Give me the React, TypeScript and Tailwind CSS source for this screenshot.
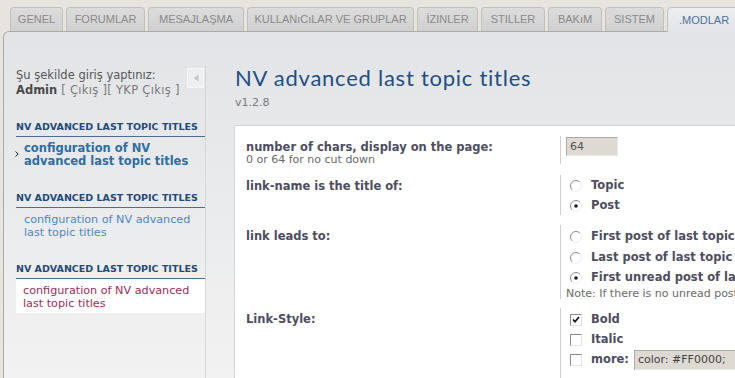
import React from 'react';

const tabs = [
  { label: 'GENEL', w: 'w-[53px]' },
  { label: 'FORUMLAR', w: 'w-[79px]' },
  { label: 'MESAJLAŞMA', w: 'w-[96px]' },
  { label: 'KULLANıCıLAR VE GRUPLAR', w: 'w-[167px]' },
  { label: 'İZINLER', w: 'w-[61px]' },
  { label: 'STILLER', w: 'w-[64px]' },
  { label: 'BAKıM', w: 'w-[54px]' },
  { label: 'SISTEM', w: 'w-[59px]' },
];

const Radio = ({ checked = false }: { checked?: boolean }) => (
  <svg width="12" height="12" viewBox="0 0 12 12" className="shrink-0">
    <circle cx="6" cy="6" r="5.5" fill="#ffffff" />
    <path d="M9.9 2.1A5.5 5.5 0 0 0 2.1 9.9" fill="none" stroke="#8c8c8c" />
    <path d="M2.1 9.9A5.5 5.5 0 0 0 9.9 2.1" fill="none" stroke="#eeeeee" />
    {checked && <circle cx="6" cy="6" r="1.8" fill="#1a1a1a" />}
  </svg>
);

const Checkbox = ({ checked = false }: { checked?: boolean }) => (
  <svg width="12" height="12" viewBox="0 0 12 12" className="shrink-0">
    <rect x="0.5" y="0.5" width="11" height="11" fill="#ffffff" stroke="#e2e2e2" />
    <path d="M0.5 11.5V0.5H11.5" fill="none" stroke="#8a8a8a" />
    {checked && <path d="M3 5.5l2 2.2 4-4.7" fill="none" stroke="#111111" strokeWidth="1.7" />}
  </svg>
);

const MenuGroup = ({ item, tone }: { item: React.ReactNode; tone: 'active' | 'link' | 'current' }) => (
  <div className="mb-[20px]">
    <div className="text-[9.5px] font-bold leading-[14px] pb-[2px] border-b border-[#4a6f97] text-[#1f4b7c] whitespace-nowrap">
      NV ADVANCED LAST TOPIC TITLES
    </div>
    <div
      className={
        tone === 'current'
          ? 'bg-white pt-[5px] pb-[3px] pl-[7px] text-[11.2px] leading-[13px] text-[#9b2d5a]'
          : tone === 'active'
          ? 'flex pt-[5px] pb-[3px] text-[11.5px] leading-[13px] font-bold text-[#2b6fa7]'
          : 'pt-[5px] pb-[3px] pl-[8px] text-[11.2px] leading-[13px] text-[#4d89c2]'
      }
    >
      {tone === 'active' && (
        <svg width="4" height="6" viewBox="0 0 4 6" className="shrink-0 mt-[9px] ml-[-1px] mr-[5px]">
          <path d="M0.5 0.5L3.2 3L0.5 5.5" fill="none" stroke="#222222" />
        </svg>
      )}
      <div>{item}</div>
    </div>
  </div>
);

export default function App() {
  return (
    <div className="w-[735px] h-[378px] overflow-hidden bg-[#e6e4dc] font-['DejaVu_Sans',sans-serif]">
      <div className="flex items-end gap-[3px] pl-[10px] h-[31px] font-['Liberation_Sans',sans-serif] text-[11px]">
        {tabs.map((t) => (
          <div
            key={t.label}
            className={`${t.w} h-[24px] shrink-0 flex items-center justify-center rounded-t-[4px] border border-b-0 border-[#c0c0c0] bg-gradient-to-b from-[#dcdcdc] to-[#d0d0d0] text-[#8a8a8a] whitespace-nowrap`}
          >
            {t.label}
          </div>
        ))}
        <div className="relative z-10 w-[80px] h-[25px] -mb-px shrink-0 flex items-center pl-[11px] rounded-t-[5px] border border-b-0 border-[#c0c0c0] bg-gradient-to-b from-[#eceef0] to-[#e2e4e7] text-[#4b73a2] whitespace-nowrap">
          .MODLAR
        </div>
      </div>

      <div className="ml-[3px] h-[347px] flex rounded-tl-[6px] border-l border-t border-[#aeaca4] bg-gradient-to-b from-[#e2e4e7] to-[#f2f2f2]">
        <div className="w-[230px] shrink-0 pl-[12px]">
          <div className="w-[190px] h-full mt-[33px] border-r border-[#d6d7d9]">
            <div className="flex justify-between">
              <div className="pt-[3px] text-[11.5px] leading-[15px] text-[#575757] whitespace-nowrap">
                <div>Şu şekilde giriş yaptınız:</div>
                <div>
                  <span className="font-bold text-[#4a4a4a]">Admin</span>
                  <span className="text-[#7a7a7a] tracking-[0.3px]"> [ Çıkış ][ YKP Çıkış ]</span>
                </div>
              </div>
              <div className="w-[17px] h-[20px] mt-[3px] mr-[1px] bg-[#eeeff0] border border-[#f6f6f6] flex items-center justify-center">
                <svg width="8" height="10" viewBox="0 0 8 10">
                  <path d="M7 0.5V9.5L1 5Z" fill="#c8c8c8" stroke="#ffffff" strokeWidth="0.6" />
                </svg>
              </div>
            </div>
            <div className="mt-[22px]">
              <MenuGroup
                tone="active"
                item={
                  <>
                    configuration of NV
                    <br />
                    advanced last topic titles
                  </>
                }
              />
              <MenuGroup
                tone="link"
                item={
                  <>
                    configuration of NV advanced
                    <br />
                    last topic titles
                  </>
                }
              />
              <MenuGroup
                tone="current"
                item={
                  <>
                    configuration of NV advanced
                    <br />
                    last topic titles
                  </>
                }
              />
            </div>
          </div>
        </div>

        <div className="flex-1 min-w-0">
          <div className="mt-[33px] pl-[1px] h-[26px] text-[22px] leading-[26px] tracking-[0.75px] text-[#1e4f86] font-['Lato',sans-serif] whitespace-nowrap">
            NV advanced last topic titles
          </div>
          <div className="mt-[5px] pl-[1px] text-[11px] leading-[14px] text-[#7a7a7a]">v1.2.8</div>
          <div className="mt-[15px] h-[260px] bg-white border-l border-t border-[#d4d5d7] pl-[11px] pt-[10px] text-[11px] text-[#4d4d5f] whitespace-nowrap">
            <div className="flex h-[28px]">
              <div className="w-[314px] shrink-0 pt-[4px]">
                <div className="font-bold text-[11.5px] leading-[14px]">number of chars, display on the page:</div>
                <div className="leading-[11px] text-[#6a6a6a]">0 or 64 for no cut down</div>
              </div>
              <div className="border-l border-[#cfcfcf] pl-[5px]">
                <div className="mt-[1px] w-[52px] h-[19px] bg-[#dedad2] border border-[#a9a9a9] border-r-[#e9e9e9] border-b-[#e9e9e9] pl-[3px] leading-[17px] text-[#555555]">
                  64
                </div>
              </div>
            </div>

            <div className="flex h-[40px] mt-[11px] text-[11.5px]">
              <div className="w-[314px] shrink-0 pt-[4px] font-bold leading-[14px]">link-name is the title of:</div>
              <div className="border-l border-[#cfcfcf] pl-[9px] pt-[1px] font-bold">
                <div className="flex items-center gap-[9px] h-[20px]">
                  <Radio />
                  Topic
                </div>
                <div className="flex items-center gap-[9px] h-[20px]">
                  <Radio checked />
                  Post
                </div>
              </div>
            </div>

            <div className="flex h-[74px] mt-[10px]">
              <div className="w-[314px] shrink-0 pt-[4px] font-bold text-[11.5px] leading-[14px]">link leads to:</div>
              <div className="border-l border-[#cfcfcf] pt-[1px]">
                <div className="pl-[9px] font-bold text-[11.5px]">
                  <div className="flex items-center gap-[9px] h-[21px]">
                    <Radio />
                    First post of last topic
                  </div>
                  <div className="flex items-center gap-[9px] h-[21px]">
                    <Radio />
                    Last post of last topic
                  </div>
                  <div className="flex items-center gap-[9px] h-[20px]">
                    <Radio checked />
                    First unread post of last topic
                  </div>
                </div>
                <div className="pl-[5px] leading-[11px] text-[#6a6a6a]">
                  Note: If there is no unread post, the last post is linked.
                </div>
              </div>
            </div>

            <div className="flex h-[80px] mt-[9px] text-[11.5px]">
              <div className="w-[314px] shrink-0 pt-[4px] font-bold leading-[14px]">Link-Style:</div>
              <div className="border-l border-[#cfcfcf] pl-[9px] pt-[2px] font-bold">
                <div className="flex items-center gap-[9px] h-[20px]">
                  <Checkbox checked />
                  Bold
                </div>
                <div className="flex items-center gap-[9px] h-[20px]">
                  <Checkbox />
                  Italic
                </div>
                <div className="flex items-center gap-[9px] h-[20px]">
                  <Checkbox />
                  more:
                  <div className="-ml-[4px] w-[140px] h-[20px] bg-[#dedad2] border border-[#a9a9a9] border-r-[#e9e9e9] border-b-[#e9e9e9] pl-[3px] text-[11px] leading-[18px] font-normal text-[#444444]">
                    color: #FF0000;
                  </div>
                </div>
              </div>
            </div>
          </div>
        </div>
      </div>
    </div>
  );
}
